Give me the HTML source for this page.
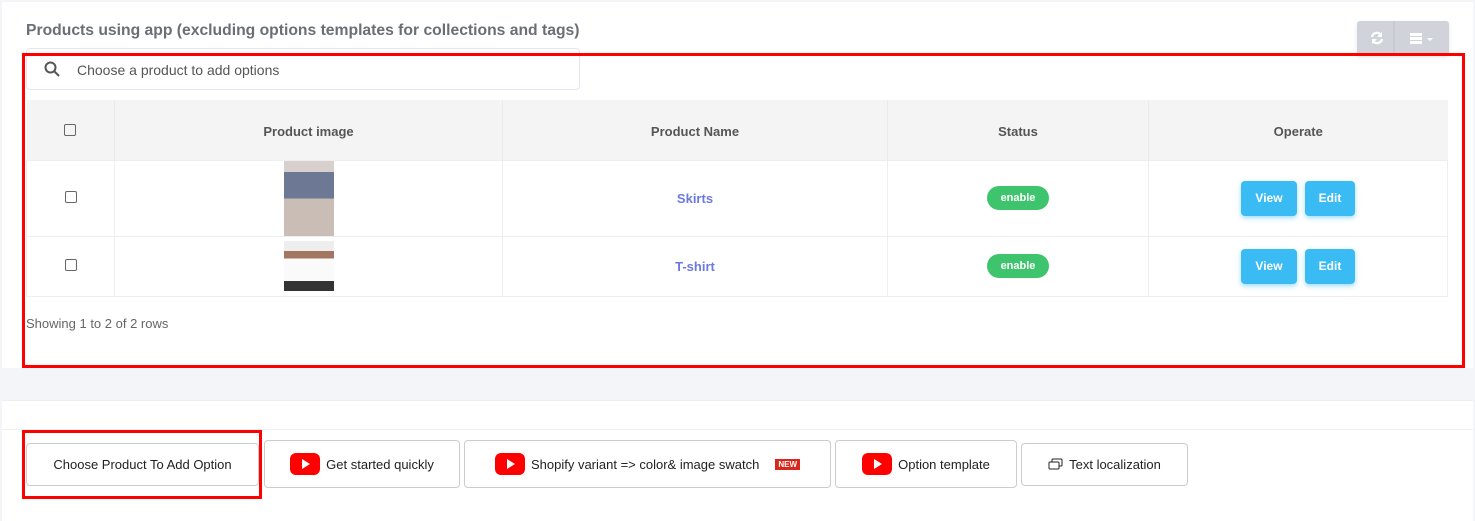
<!DOCTYPE html>
<html><head><style>
*{box-sizing:border-box;margin:0;padding:0}
body{width:1475px;height:521px;background:#f4f5f8;font-family:"Liberation Sans",sans-serif;position:relative;overflow:hidden;color:#333}
.abs{position:absolute}
.card1{left:2px;top:2px;width:1471px;height:366px;background:#fff}
.card2{left:2px;top:400px;width:1471px;height:121px;background:#fff;border-top:1px solid #eee}
.title{left:26px;top:22px;font-size:15.7px;font-weight:bold;color:#6a6f76}
.search{left:26px;top:48px;width:554px;height:42px;border:1px solid #e3e6f0;border-radius:4px;font-size:14px;color:#555}
table{position:absolute;left:26px;top:100px;width:1422px;border-collapse:collapse;font-size:13px}
th{background:#f4f4f4;height:60px;padding-top:3px;font-weight:bold;color:#555;border-right:1px solid #eaeaea}
td{border:1px solid #eee;text-align:center;color:#6c7ae0;font-weight:bold}
.cb{width:12px;height:12px;border:1px solid #666;border-radius:2px;display:inline-block}
.en{display:inline-block;background:#3ec46d;color:#fff;font-size:11px;border-radius:13px;padding:6px 0;width:62px;font-weight:bold}
.btn{display:inline-block;background:#3bbbf3;color:#fff;border-radius:4px;width:56px;height:35px;line-height:35px;font-size:12px;box-shadow:0 2px 5px rgba(59,187,243,.5);margin:0 4px}
.red{border:3px solid #f00}
.bb{position:absolute;border:1px solid #ccc;border-radius:4px;background:#fff;font-size:13px;color:#222;display:flex;align-items:center;justify-content:center;gap:6px}
.yt{width:30px;height:22px;background:#f00;border-radius:6px;position:relative}
.yt:after{content:"";position:absolute;left:12px;top:6px;border-left:8px solid #fff;border-top:5px solid transparent;border-bottom:5px solid transparent}
</style></head><body>
<div class="abs card1"></div>
<div class="abs title">Products using app (excluding options templates for collections and tags)</div>
<div class="abs" style="left:1357px;top:21px;width:92px;height:34px;background:#d0d4da;border-radius:3px;box-shadow:0 2px 4px rgba(0,0,0,.1)">
<div class="abs" style="left:36px;top:0;width:2px;height:34px;background:#c7cbd1"></div>
<svg class="abs" style="left:13px;top:10px" width="14" height="14" viewBox="0 0 14 14"><path d="M2 6A5 5 0 0 1 11 4M12 8A5 5 0 0 1 3 10" stroke="#fff" stroke-width="2.2" fill="none"/><path d="M12 1v5H7zM2 13V8h5z" fill="#fff"/></svg>
<svg class="abs" style="left:53px;top:12px" width="24" height="11"><rect x="0" y="0" width="12" height="3" fill="#fff"/><rect x="0" y="4" width="12" height="3" fill="#fff"/><rect x="0" y="8" width="12" height="3" fill="#fff"/><path d="M17 5h6l-3 3z" fill="#fff"/></svg>
</div>
<div class="abs search"><svg class="abs" style="left:17px;top:12px" width="16" height="16"><circle cx="6.5" cy="6.5" r="5" stroke="#555" stroke-width="2" fill="none"/><path d="M10 10l5 5" stroke="#555" stroke-width="2"/></svg><span class="abs" style="left:50px;top:13px">Choose a product to add options</span></div>
<table>
<tr><th style="width:88px"><span class="cb"></span></th><th style="width:388px">Product image</th><th style="width:385px">Product Name</th><th style="width:261px">Status</th><th style="border-right:0">Operate</th></tr>
<tr style="height:76px"><td><span class="cb"></span></td><td><div style="width:50px;height:75px;margin:0 auto;background:linear-gradient(#d8d0cc 0,#d8d0cc 15%,#6c7894 15%,#6c7894 50%,#c9bdb6 50%)"></div></td><td>Skirts</td><td><span class="en">enable</span></td><td><span class="btn">View</span><span class="btn" style="width:50px">Edit</span></td></tr>
<tr style="height:60px"><td><span class="cb"></span></td><td><div style="width:50px;height:50px;margin:0 auto;background:linear-gradient(#eee 0,#eee 20%,#a27660 20%,#a27660 35%,#fafafa 35%,#fafafa 80%,#333 80%)"></div></td><td>T-shirt</td><td><span class="en">enable</span></td><td><span class="btn">View</span><span class="btn" style="width:50px">Edit</span></td></tr>
</table>
<div class="abs" style="left:26px;top:316px;font-size:13px;color:#666">Showing 1 to 2 of 2 rows</div>
<div class="abs red" style="left:22px;top:53px;width:1443px;height:315px"></div>
<div class="abs card2"></div>
<div class="abs" style="left:2px;top:429px;width:1471px;height:1px;background:#f0f0f0"></div>
<div class="bb" style="left:26px;top:443px;width:233px;height:43px">Choose Product To Add Option</div>
<div class="abs red" style="left:22px;top:430px;width:240px;height:69px"></div>
<div class="bb" style="left:264px;top:440px;width:196px;height:48px"><span class="yt"></span>Get started quickly</div>
<div class="bb" style="left:464px;top:440px;width:367px;height:48px"><span class="yt"></span>Shopify variant =&gt; color&amp; image swatch<span style="background:#d9271c;color:#fff;font-size:8px;font-weight:bold;padding:1px 3px;margin-left:10px">NEW</span></div>
<div class="bb" style="left:835px;top:440px;width:182px;height:48px"><span class="yt"></span>Option template</div>
<div class="bb" style="left:1021px;top:443px;width:167px;height:43px"><svg width="15" height="13"><rect x="4" y="1" width="10" height="7" rx="1" stroke="#222" fill="none"/><rect x="1" y="4" width="10" height="7" rx="1" stroke="#222" fill="#fff"/></svg>Text localization</div>
</body></html>
